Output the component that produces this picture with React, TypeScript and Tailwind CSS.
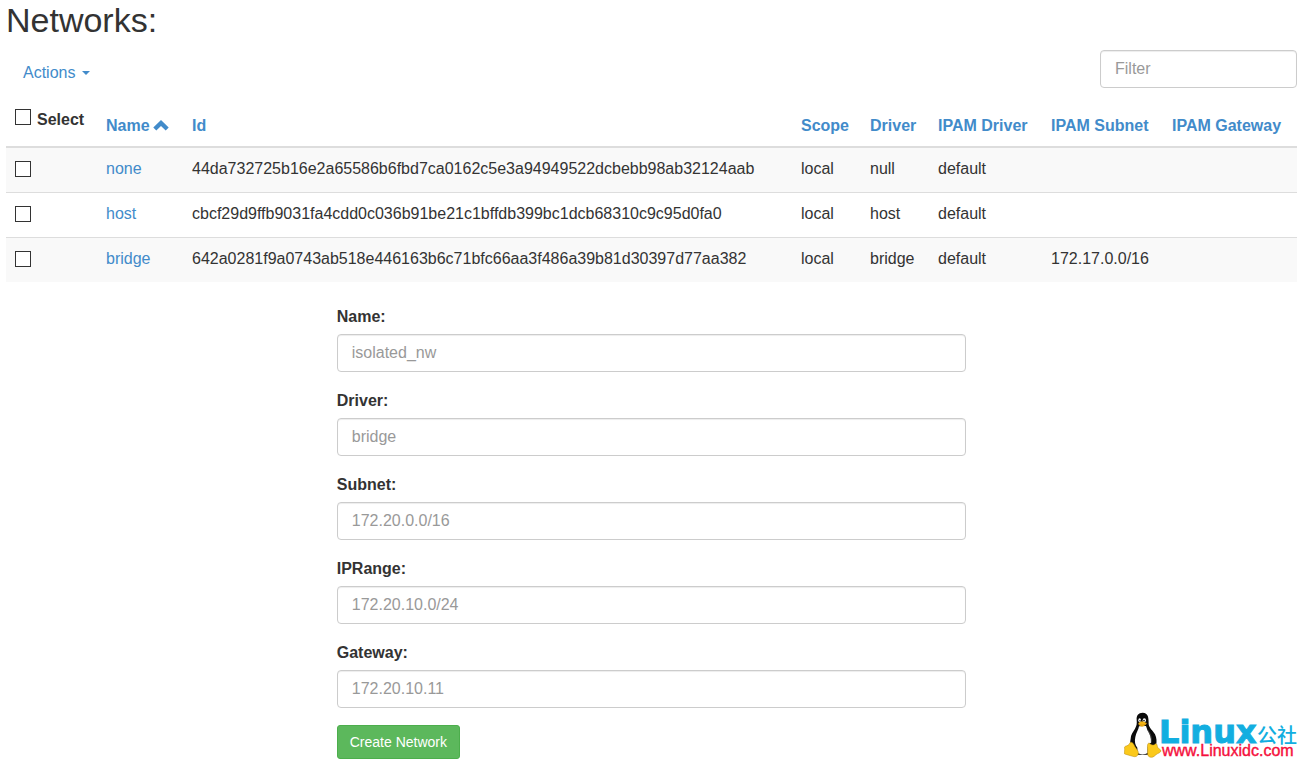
import { useState } from 'react';

const columns = ['Scope', 'Driver', 'IPAM Driver', 'IPAM Subnet', 'IPAM Gateway'];

const networks = [
  {
    name: 'none',
    id: '44da732725b16e2a65586b6fbd7ca0162c5e3a94949522dcbebb98ab32124aab',
    scope: 'local',
    driver: 'null',
    ipamDriver: 'default',
    subnet: '',
    gateway: '',
  },
  {
    name: 'host',
    id: 'cbcf29d9ffb9031fa4cdd0c036b91be21c1bffdb399bc1dcb68310c9c95d0fa0',
    scope: 'local',
    driver: 'host',
    ipamDriver: 'default',
    subnet: '',
    gateway: '',
  },
  {
    name: 'bridge',
    id: '642a0281f9a0743ab518e446163b6c71bfc66aa3f486a39b81d30397d77aa382',
    scope: 'local',
    driver: 'bridge',
    ipamDriver: 'default',
    subnet: '172.17.0.0/16',
    gateway: '',
  },
];

const fields = [
  { id: 'name', label: 'Name:', placeholder: 'isolated_nw' },
  { id: 'driver', label: 'Driver:', placeholder: 'bridge' },
  { id: 'subnet', label: 'Subnet:', placeholder: '172.20.0.0/16' },
  { id: 'iprange', label: 'IPRange:', placeholder: '172.20.10.0/24' },
  { id: 'gateway', label: 'Gateway:', placeholder: '172.20.10.11' },
];

const inputClass =
  'block w-full h-[38px] px-3.5 text-base text-[#555] bg-white border border-[#ccc] rounded placeholder:text-[#999] shadow-[inset_0_1px_1px_rgba(0,0,0,0.075)] outline-none focus:border-[#66afe9]';

const checkboxClass =
  'appearance-none block w-4 h-4 shrink-0 bg-white border border-[#333] checked:bg-[#428bca]';

function Logo() {
  return (
    <svg width="176" height="50" viewBox="0 0 176 50" role="img" aria-label="Linux公社">
      {/* Tux */}
      <g transform="translate(-4 -3) scale(0.3333)">
        <path
          d="M68 14C55 14 49 23 50 36c1 12 0 17-5 26-6 10-13 19-13 30-1 8-3 13 1 20l17 28h40l18-28c3-10 2-23-3-33-6-11-17-18-19-30 0-20-1-35-18-35z"
          fill="#0a0a0a"
        />
        <path
          d="M57 55c-1 10-9 20-11 32-3 14-1 24 6 32 1 8-1 13 2 17 9 5 22 4 29-2 0-9-1-20 3-26l7-4c1-16-4-26-9-34-3-6-4-11-6-16z"
          fill="#fdfdfd"
        />
        <path d="M83 66c8 10 13 23 11 38" fill="none" stroke="#777" strokeWidth="1.500" />
        <ellipse cx="59" cy="37" rx="4" ry="6" fill="#fff" />
        <ellipse cx="73" cy="37" rx="5" ry="6.500" fill="#fff" />
        <circle cx="60" cy="38" r="2.200" fill="#111" />
        <circle cx="72" cy="38" r="2.500" fill="#111" />
        <path d="M55 46c3-3 7-6 11-6 5 0 9 3 14 5 0 5-8 10-14 11-5 0-11-5-11-10z" fill="#f3b416" />
        <path d="M56 49c6 4 15 3 23-2" fill="none" stroke="#b87a08" strokeWidth="1.500" />
        <path
          d="M31 103c6-2 10 5 14 13 4 7 11 12 10 20-1 9-8 12-17 9-8-3-16-4-24-7-3-3 0-8 0-13 0-4-2-8 2-10 6-2 11-3 15-12z"
          fill="#fbc91b"
          stroke="#b98a10"
          strokeWidth="1.500"
        />
        <path
          d="M84 107c3-3 5-1 8 2 5 4 11 2 15-2 5 0 4 6 6 11 3 5 10 7 10 11-1 5-10 7-15 11-6 6-12 10-19 7-8-3-6-12-6-20 0-8-2-15 1-20z"
          fill="#fbc91b"
          stroke="#b98a10"
          strokeWidth="1.500"
        />
      </g>
      <text
        x="35"
        y="32"
        fontSize="32"
        fontWeight="700"
        fill="#12aee0"
        stroke="#12aee0"
        className="font-['DejaVu_Sans',sans-serif]"
      >
        Linux
      </text>
      <text x="133" y="32" fontSize="20" fontWeight="500" fill="#12aee0" className="font-['Noto_Sans_CJK_SC',sans-serif]">
        公社
      </text>
      <text x="38" y="45" fontSize="16" fill="#f5103c" stroke="#f5103c" strokeWidth="0.400">
        www.Linuxidc.com
      </text>
    </svg>
  );
}

export default function App() {
  const [selected, setSelected] = useState<string[]>([]);
  const [filter, setFilter] = useState('');

  const visible = networks.filter((n) => Object.values(n).join(' ').includes(filter));
  const allSelected = selected.length === networks.length;

  const toggle = (name: string) =>
    setSelected(selected.includes(name) ? selected.filter((s) => s !== name) : [...selected, name]);

  return (
    <div className="relative min-h-screen bg-white pl-1.5 pr-[3px] pb-0.5 font-['Liberation_Sans',Arial,sans-serif] text-base leading-[23px] text-[#333]">
      <h1 className="pt-px text-[34px] leading-[38px]">Networks:</h1>

      {/* Toolbar */}
      <div className="flex items-start justify-between mt-[11px] mb-1">
        <button type="button" className="flex items-center gap-[7px] px-[17px] py-[11px] text-[#428bca]">
          Actions
          <svg width="8" height="4" viewBox="0 0 8 4" fill="currentColor" aria-hidden="true">
            <path d="M0 0h8L4 4z" />
          </svg>
        </button>
        <div className="w-[197px]">
          <input
            type="text"
            aria-label="Filter"
            placeholder="Filter"
            value={filter}
            onChange={(e) => setFilter(e.target.value)}
            className={inputClass}
          />
        </div>
      </div>

      {/* Networks table */}
      <table className="w-full table-fixed border-collapse text-left">
        <colgroup>
          <col className="w-[91px]" />
          <col className="w-[86px]" />
          <col />
          <col className="w-[69px]" />
          <col className="w-[68px]" />
          <col className="w-[113px]" />
          <col className="w-[121px]" />
          <col className="w-[134px]" />
        </colgroup>
        <thead>
          <tr className="border-b-2 border-[#ddd] align-bottom text-[#428bca]">
            <th className="p-[9px] text-[#333]">
              <label className="flex items-start gap-1.5 mb-1.5">
                <input
                  type="checkbox"
                  checked={allSelected}
                  onChange={() => setSelected(allSelected ? [] : networks.map((n) => n.name))}
                  className={`${checkboxClass} mt-px`}
                />
                Select
              </label>
            </th>
            <th className="p-[9px]">
              <a href="#name" className="flex items-center gap-[3px]">
                Name
                <svg width="16" height="11" viewBox="0 0 16 11" fill="currentColor" aria-hidden="true">
                  <path d="M8 0l7.700 7.500-3 3L8 6l-4.700 4.500-3-3z" />
                </svg>
              </a>
            </th>
            <th className="p-[9px]">
              <a href="#id">Id</a>
            </th>
            {columns.map((column) => (
              <th key={column} className="p-[9px] whitespace-nowrap">
                <a href="#sort">{column}</a>
              </th>
            ))}
          </tr>
        </thead>
        <tbody>
          {visible.map((n) => (
            <tr key={n.name} className="h-[45px] align-top border-t border-[#ddd] odd:bg-[#f9f9f9]">
              <td className="p-[9px]">
                <input
                  type="checkbox"
                  aria-label={`Select ${n.name}`}
                  checked={selected.includes(n.name)}
                  onChange={() => toggle(n.name)}
                  className={`${checkboxClass} mt-1`}
                />
              </td>
              <td className="p-[9px]">
                <a href={`#${n.name}`} className="text-[#428bca]">
                  {n.name}
                </a>
              </td>
              <td className="p-[9px]">{n.id}</td>
              <td className="p-[9px]">{n.scope}</td>
              <td className="p-[9px]">{n.driver}</td>
              <td className="p-[9px]">{n.ipamDriver}</td>
              <td className="p-[9px]">{n.subnet}</td>
              <td className="p-[9px]">{n.gateway}</td>
            </tr>
          ))}
        </tbody>
      </table>

      {/* Create form */}
      <form className="w-1/2 mx-auto px-2 mt-[23px]" onSubmit={(e) => e.preventDefault()}>
        {fields.map((field) => (
          <div key={field.id} className="mb-[17px]">
            <label htmlFor={field.id} className="block mb-1.5 font-bold">
              {field.label}
            </label>
            <input id={field.id} type="text" placeholder={field.placeholder} className={inputClass} />
          </div>
        ))}
        <button
          type="submit"
          className="block h-[34px] px-3 text-sm text-white bg-[#5cb85c] border border-[#4cae4c] rounded-[3px]"
        >
          Create Network
        </button>
      </form>

      <div className="absolute right-0 bottom-0">
        <Logo />
      </div>
    </div>
  );
}
